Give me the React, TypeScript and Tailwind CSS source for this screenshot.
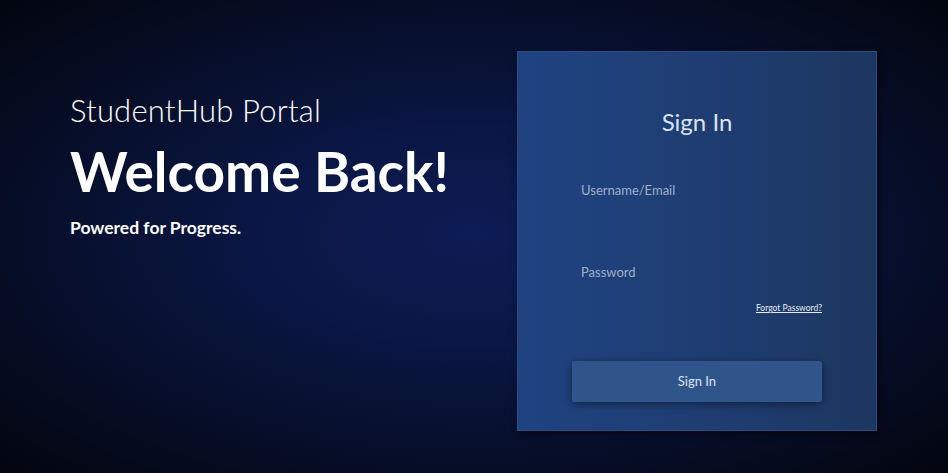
export default function App() {
  return (
    <div
      className="relative h-[473px] w-full overflow-hidden bg-[radial-gradient(ellipse_at_50%_50%,#0d1c55_0%,#0a1642_35%,#060d26_70%,#03060f_100%)]"
      style={{ fontFamily: "Lato, 'Noto Sans', sans-serif" }}
    >
      <div className="flex h-full items-start justify-between pl-[70px] pr-[71px] pt-[51px]">
        <div className="mt-[40px] flex flex-col text-white">
          <h2 className="text-[31px] font-light leading-[38px] tracking-[0.2px]">StudentHub Portal</h2>
          <h1 className="mt-[10px] text-[55px] font-bold leading-[64px]">Welcome Back!</h1>
          <p className="mt-[14px] text-[17.5px] font-bold leading-[22px]">Powered for Progress.</p>
        </div>
        <div className="flex h-[380px] w-[360px] flex-col items-center border border-[#2a4b80] bg-[linear-gradient(90deg,#1f4381_0%,#1e3c70_60%,#1c375f_100%)] shadow-[2px_3px_6px_rgba(0,0,0,0.5)]">
          <h3 className="mt-[54px] text-[24px] font-normal leading-[32px] text-[#dbe3f0]">Sign In</h3>
          <div className="mt-[43px] w-full pl-[63px] pr-[54px]">
            <div className="text-[13px] leading-[18px] text-[#9fb0c9]">Username/Email</div>
            <div className="mt-[64px] text-[13px] leading-[18px] text-[#9fb0c9]">Password</div>
            <div className="mt-[12px] text-right">
              <a className="text-[8.5px] leading-[12px] text-[#e4eaf3] underline">Forgot Password?</a>
            </div>
          </div>
          <button className="mt-[44px] h-[41px] w-[250px] rounded-[2px] bg-[#30558a] text-[13px] text-[#dbe3f0] shadow-[0_2px_8px_rgba(0,0,0,0.45)]">
            Sign In
          </button>
        </div>
      </div>
    </div>
  );
}
